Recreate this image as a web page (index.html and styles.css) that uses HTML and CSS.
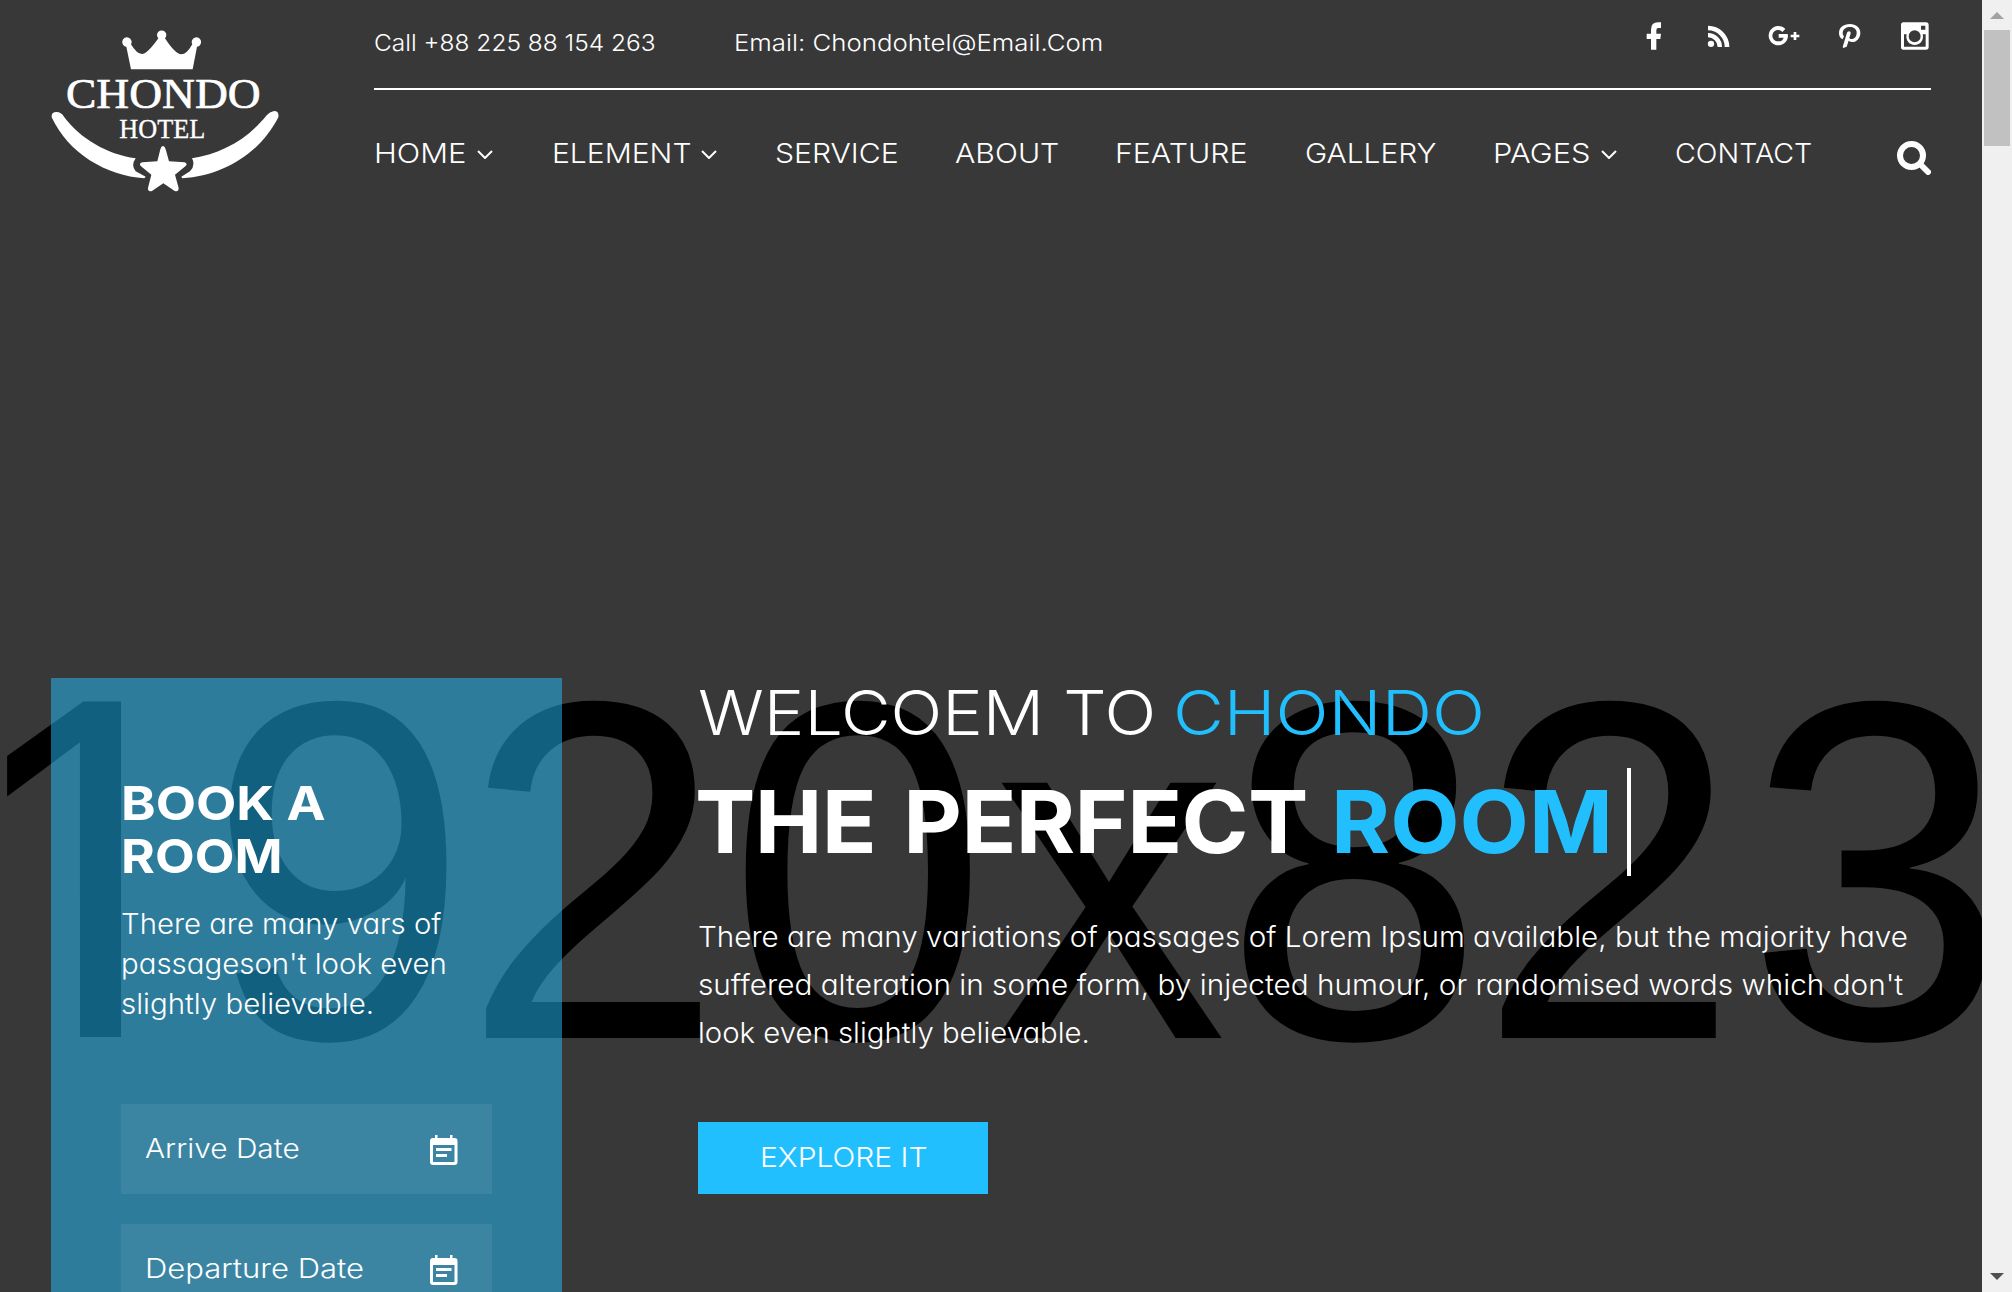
FILE: index.html
```
<!DOCTYPE html>
<html lang="en">
<head>
<meta charset="utf-8">
<title>Chondo Hotel</title>
<link rel="stylesheet" href="styles.css">
</head>
<body>
<div class="page">
  <svg class="backdrop" width="1982" height="1292" viewBox="0 0 1982 1292" aria-hidden="true">
    <defs><clipPath id="one"><path d="M-20 600H121V1060H80V900H-20Z"/></clipPath></defs>
    <g clip-path="url(#one)"><text transform="scale(1 1.04)" x="-38" y="997.1">1</text></g>
    <text transform="scale(1 1.03)" x="207.8 462.6 727.4 992.2 1223.7 1478.5 1746.3" y="1007.8">920x823</text>
  </svg>

  <header class="header">
    <svg class="logo" width="228" height="162" viewBox="63 60 684 486">
      <g fill="#fff">
        <path d="M303 178L289 110A14 14 0 1 1 303 103Q320 132 336 132Q352 132 385 85A14 14 0 1 1 405 85Q436 133 454 133Q470 133 487 103A14 14 0 1 1 501 110L488 178Z"/>
        <path d="M65 322Q63 306 80 306Q93 306 102 320C150 385 230 432 317 445Q302 466 317 484L347 500L343 505C230 498 115 430 65 322Z"/>
        <path d="M745 322Q748 303 732 303Q719 305 710 316C650 390 575 430 486 445Q497 466 480 484L454 500L457 505C580 497 690 430 745 322Z"/>
        <path d="M399 408Q404 408 407 418L417 454L463 457Q475 460 466 469L435 494L446 534Q446 547 434 543L400 520L366 543Q353 547 354 534L364 494L333 469Q325 460 337 457L382 454L391 418Q394 408 399 408Z"/>
        <text x="108" y="295" font-size="128" textLength="584" lengthAdjust="spacingAndGlyphs" stroke="#fff" stroke-width="2">CHONDO</text>
        <text x="268" y="385" font-size="82" textLength="258" lengthAdjust="spacingAndGlyphs" stroke="#fff" stroke-width="1">HOTEL</text>
      </g>
    </svg>
    <div class="head-main">
      <div class="topbar">
        <span class="contact call">Call +88 225 88 154 263</span>
        <span class="contact mail">Email: Chondohtel@Email.Com</span>
        <div class="social">
          <svg width="16" height="28" viewBox="78 66 48 84"><path d="M93 149V117H80V101H93V89Q93 67 114 67H123V84H115Q109 84 109 91V101H123L121 117H109V149Z"/></svg>
          <svg width="23" height="28" viewBox="261 66 69 84"><circle cx="273" cy="131.500" r="9.500"/><path d="M264 77A64 64 0 0 1 328 141H314A50 50 0 0 0 264 91ZM264 99A42 42 0 0 1 306 141H293A29 29 0 0 0 264 112Z"/></svg>
          <svg width="32" height="28" viewBox="444 66 96 84"><path d="M476 102V113H491Q488 124 476 124A17 17 0 1 1 487 96L496 87A29 29 0 1 0 504 108L503 102Z"/><path d="M521 96H529V104H538V112H529V120H521V112H512V104H521Z"/></svg>
          <svg width="23" height="28" viewBox="654 66 69 84"><path d="M668 118C660 114 657 107 657 99C657 83 670 72 690 72C708 72 721 83 721 98C721 114 710 126 697 126Q690 126 686 122L680 140L670 144L668 141L680 101C683 91 693 92 692 101L688 113C688 120 710 120 710 98C710 75 669 76 668 99Q668 106 672 109Z"/></svg>
          <svg width="30" height="28" viewBox="841 66 90 84"><path fill-rule="evenodd" d="M851 67H919Q927 67 927 75V141Q927 149 919 149H851Q844 149 844 141V75Q844 67 851 67ZM853 103V140H918V103H909A25 25 0 1 1 861 103ZM904 77V89H917V77ZM885 91A18 18 0 1 0 885 127A18 18 0 1 0 885 91Z"/></svg>
        </div>
      </div>
      <nav class="nav">
        <a><span style="--sx:1.144">HOME</span><svg class="chev home" viewBox="0 0 16 9"><path d="M1 1L8 8L15 1"/></svg></a>
        <a><span style="--sx:1.112">ELEMENT</span><svg class="chev element" viewBox="0 0 16 9"><path d="M1 1L8 8L15 1"/></svg></a>
        <a><span style="--sx:1.116">SERVICE</span></a>
        <a><span style="--sx:1.119">ABOUT</span></a>
        <a><span style="--sx:1.122">FEATURE</span></a>
        <a><span style="--sx:1.107">GALLERY</span></a>
        <a><span style="--sx:1.139">PAGES</span><svg class="chev pages" viewBox="0 0 16 9"><path d="M1 1L8 8L15 1"/></svg></a>
        <a><span style="--sx:1.058">CONTACT</span></a>
        <svg class="search" width="34" height="34" viewBox="0 0 34 34"><circle cx="14.500" cy="14.500" r="11.500"/><path d="M23 23L31 31"/></svg>
      </nav>
    </div>
  </header>

  <main class="hero">
    <section class="booking">
      <h2><span class="w-book">BOOK A</span><span class="w-room">ROOM</span></h2>
      <p><span class="b1">There are many vars of</span><span class="b2">passageson't look even</span><span class="b3">slightly believable.</span></p>
      <div class="field"><span class="w-arrive">Arrive Date</span><svg width="28" height="31" viewBox="0 0 28 31"><path fill-rule="evenodd" d="M5 0H7.500V3H20V0H22.500V3H24.500Q27.500 3 27.500 6V27Q27.500 30 24.500 30H3Q0 30 0 27V6Q0 3 3 3H5ZM3 10V27H24.500V10ZM6 13H21.500V16H6ZM6 19H17V22H6Z"/></svg></div>
      <div class="field"><span class="w-depart">Departure Date</span><svg width="28" height="31" viewBox="0 0 28 31"><path fill-rule="evenodd" d="M5 0H7.500V3H20V0H22.500V3H24.500Q27.500 3 27.500 6V27Q27.500 30 24.500 30H3Q0 30 0 27V6Q0 3 3 3H5ZM3 10V27H24.500V10ZM6 13H21.500V16H6ZM6 19H17V22H6Z"/></svg></div>
    </section>
    <section class="intro">
      <div class="welcome"><span class="w-welcome">WELCOEM TO</span><span class="accent w-chondo">CHONDO</span></div>
      <h1 class="headline"><span class="w-perfect">THE PERFECT</span><span class="accent w-rooms">ROOM</span><i class="caret"></i></h1>
      <p><span class="p1">There are many variations of passages of Lorem Ipsum available, but the majority have</span><span class="p2">suffered alteration in some form, by injected humour, or randomised words which don't</span><span class="p3">look even slightly believable.</span></p>
      <a class="button"><span>EXPLORE IT</span></a>
    </section>
  </main>
</div>
<aside class="scrollbar" aria-hidden="true">
  <svg width="14" height="7" viewBox="0 0 14 7"><path fill="#a2a2a2" d="M7 0L14 7H0Z"/></svg>
  <div class="thumb"></div>
  <svg class="down" width="14" height="7" viewBox="0 0 14 7"><path fill="#505050" d="M0 0H14L7 7Z"/></svg>
</aside>
</body>
</html>
```
FILE: styles.css
```
* { box-sizing: border-box; }
body {
  margin: 0;
  display: flex;
  height: 1292px;
  overflow: hidden;
  background: #383838;
  color: #fff;
  font-family: Inter, "Open Sans", sans-serif;
}
h1, h2, p { margin: 0; }
svg { display: block; flex: none; }

.page { position: relative; width: 1982px; height: 1292px; overflow: hidden; }
.backdrop { position: absolute; left: 0; top: 0; }
.backdrop text { font-family: "Liberation Sans", Arial, sans-serif; font-size: 469px; fill: #000; }

/* Header */
.header { position: relative; display: flex; height: 678px; padding: 0 51px; }
.logo { margin-top: 30px; font-family: "Liberation Serif", serif; }
.head-main { width: 1557px; margin-left: 95px; }
.topbar {
  display: grid;
  grid-template-columns: 360px 1fr auto;
  height: 90px;
  border-bottom: 2px solid #fff;
}
.contact { font-size: 23px; font-weight: 350; line-height: 28px; margin-top: 29px; white-space: nowrap; transform-origin: 0 0; justify-self: start; }
.call { transform: scaleX(1.064); }
.mail { transform: scaleX(1.121); }
.social { display: flex; margin: 22px 1px 0 0; fill: #fff; }
.social svg + svg { margin-left: 38px; }
.social svg:nth-child(2) { margin-left: 45px; }
.social svg:nth-child(5) { margin-left: 39px; }

.nav {
  display: grid;
  grid-template-columns: 178px 223px 180px 160px 190px 188px 182px 222px 34px;
  margin-top: 47px;
  align-items: start;
}
.nav a { display: flex; font-size: 27px; font-weight: 300; line-height: 34px; }
.nav span { transform: scaleX(var(--sx)); transform-origin: 0 0; }
.chev { width: 16px; height: 9px; margin-top: 13px; fill: none; stroke: #fff; stroke-width: 2; }
.home { margin-left: 22px; }
.element { margin-left: 24px; }
.pages { margin-left: 22px; }
.search { margin-top: 4px; fill: none; stroke: #fff; stroke-width: 6; stroke-linecap: round; }

/* Hero */
.hero { position: relative; display: flex; padding-left: 51px; gap: 136px; }
.hero span { white-space: nowrap; transform-origin: 0 0; }
.booking { width: 511px; height: 700px; padding: 98px 70px 0; background: rgba(34, 192, 255, .5); }
.booking h2 { display: grid; font-size: 47px; line-height: 53px; }
.w-book { transform: scaleX(1.114); }
.w-room { transform: scaleX(1.098); }
.booking p { margin: 22px 0 80px; font-size: 28px; font-weight: 300; line-height: 40px; font-feature-settings: "cv11"; }
.booking p span, .intro p span { display: block; }
.b1 { transform: scaleX(1.047); }
.b2 { transform: scaleX(1.05); }
.b3 { transform: scaleX(1.052); }
.field {
  display: flex;
  justify-content: space-between;
  height: 90px;
  margin-bottom: 30px;
  padding: 31px 34px 0 24px;
  background: rgba(255, 255, 255, .07);
  font-size: 27px;
  font-weight: 300;
  line-height: 28px;
  fill: #fff;
}
.w-arrive { transform: scaleX(1.106); }
.w-depart { transform: scaleX(1.148); }

.intro { width: 1240px; }
.accent { color: #22bfff; }
.welcome { display: grid; grid-template-columns: 475px 1fr; font-size: 62px; font-weight: 300; line-height: 70px; }
.welcome, .headline { justify-items: start; }
.w-welcome { transform: scaleX(1.099); }
.w-chondo { transform: scaleX(1.127); }
.headline {
  display: grid;
  grid-template-columns: 633px 296px 4px;
  height: 108px;
  margin-top: 20px;
  font-size: 87px;
  line-height: 108px;
}
.w-perfect { transform: scaleX(1.041); margin-left: -3px; letter-spacing: -.6px; word-spacing: 6px; }
.w-rooms { transform: scaleX(1.035); }
.caret { width: 4px; height: 108px; background: #fff; }
.intro p { margin-top: 37px; font-size: 28px; font-weight: 300; line-height: 48px; font-feature-settings: "cv11"; }
.p1 { transform: scaleX(1.058); }
.p2 { transform: scaleX(1.062); }
.p3 { transform: scaleX(1.047); }
.button {
  display: flex;
  width: 290px;
  height: 72px;
  margin-top: 65px;
  padding-left: 62px;
  background: #22bfff;
  font-size: 27px;
  font-weight: 300;
  line-height: 72px;
}
.button span { transform: scaleX(1.11); }

/* Scrollbar */
.scrollbar { display: flex; flex-direction: column; align-items: center; width: 30px; height: 1292px; padding: 12px 0; background: #f0f0f0; }
.thumb { width: 26px; height: 116px; margin-top: 11px; background: #c1c1c1; }
.down { margin-top: auto; }
```
